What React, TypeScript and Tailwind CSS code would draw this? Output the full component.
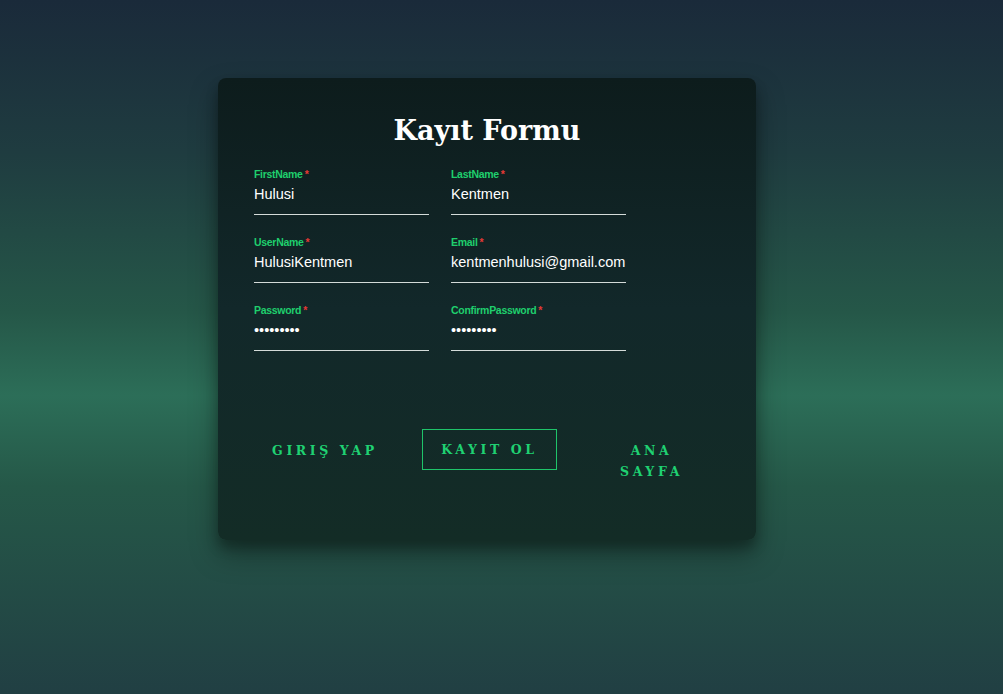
import { useState } from "react";

type Field = {
  name: string;
  label: string;
  type: string;
  value: string;
};

const fields: Field[] = [
  { name: "firstName", label: "FirstName", type: "text", value: "Hulusi" },
  { name: "lastName", label: "LastName", type: "text", value: "Kentmen" },
  { name: "userName", label: "UserName", type: "text", value: "HulusiKentmen" },
  { name: "email", label: "Email", type: "email", value: "kentmenhulusi@gmail.com" },
  { name: "password", label: "Password", type: "password", value: "123456789" },
  { name: "confirmPassword", label: "ConfirmPassword", type: "password", value: "123456789" },
];

const App = () => {
  const [values, setValues] = useState<Record<string, string>>(
    Object.fromEntries(fields.map((f) => [f.name, f.value]))
  );

  return (
    <div className="min-h-screen w-full bg-[linear-gradient(180deg,#1a2a3a_0%,#1f3c40_22%,#255748_45%,#2c6e58_57%,#255848_70%,#213f43_100%)] pt-[78px]">
      <div className="ml-[218px] w-[538px] rounded-lg bg-[linear-gradient(180deg,#0d1c1c_0%,#12282a_50%,#132c26_100%)] px-9 pt-[37px] pb-[47px] shadow-[0_14px_28px_rgba(0,0,0,0.35),0_8px_12px_rgba(0,0,0,0.25)]">
        <h1 className="text-center font-['DejaVu_Serif',serif] text-[27px] font-bold leading-[32px] text-white">
          Kayıt Formu
        </h1>

        <form
          className="mt-[21px] grid grid-cols-[175px_175px] gap-x-[22px] gap-y-[21px]"
          onSubmit={(e) => e.preventDefault()}
        >
          {fields.map((f) => (
            <div key={f.name} className="flex flex-col">
              <label
                htmlFor={f.name}
                className="font-['Liberation_Sans',Arial,sans-serif] text-[10.5px] font-bold leading-[12px] tracking-[-0.3px] text-[#1fcf6d]"
              >
                {f.label}
                <span className="ml-[2px] text-[#e53935]">*</span>
              </label>
              <input
                id={f.name}
                type={f.type}
                value={values[f.name]}
                onChange={(e) => setValues({ ...values, [f.name]: e.target.value })}
                className="h-[35px] w-full border-b border-[#d4dbd9] bg-transparent pb-[6px] font-['Liberation_Sans',Arial,sans-serif] text-[14.5px] text-white outline-none"
              />
            </div>
          ))}
        </form>

        <div className="mt-[78px] flex items-start gap-[26px] font-['DejaVu_Serif',serif] text-[12.5px] font-bold leading-[21px] tracking-[3.6px] text-[#1fd172]">
          <button className="w-[142px] border border-transparent py-[10px] text-center uppercase">
            GIRIŞ YAP
          </button>
          <button className="w-[135px] border border-[#1fc46a] py-[9px] text-center uppercase">
            KAYIT OL
          </button>
          <button className="w-[137px] border border-transparent px-5 py-[10px] text-center uppercase">
            ANA SAYFA
          </button>
        </div>
      </div>
    </div>
  );
};

export default App;
